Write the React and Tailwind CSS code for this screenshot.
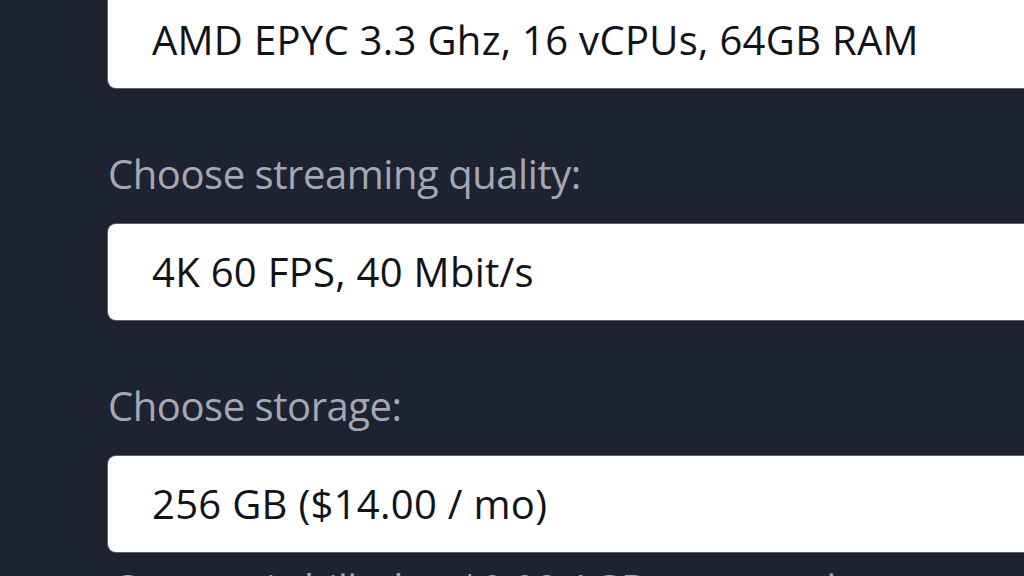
const options = [
  { label: null, value: 'AMD EPYC 3.3 Ghz, 16 vCPUs, 64GB RAM' },
  { label: 'Choose streaming quality:', value: '4K 60 FPS, 40 Mbit/s' },
  { label: 'Choose storage:', value: '256 GB ($14.00 / mo)' },
];

const App = () => {
  return (
    <div className="h-[576px] w-[1024px] overflow-hidden bg-[#1e2331]" style={{ fontFamily: '"Open Sans", "Noto Sans", sans-serif' }}>
      <div className="-mt-[8px] pl-[108px] flex flex-col">
        {options.map((opt, i) => (
          <div key={i}>
            {/* Label */}
            {opt.label && (
              <p className="mt-[56px] mb-[20px] text-[40px] leading-[60px] tracking-[-0.45px] text-[#a3a8b3]">{opt.label}</p>
            )}
            {/* Select box */}
            <div className="w-[1000px] h-[96px] flex items-center pl-[44px] rounded-[8px] bg-white shadow-[0_0_0_1px_#5b606b] text-[40px] leading-[60px] tracking-[0.3px] text-[#111318]">
              {opt.value}
            </div>
          </div>
        ))}
        <p className="mt-[7px] pl-[8px] text-[40px] leading-[60px] tracking-[-0.45px] text-[#a3a8b3]">Storage is billed at $0.02 / GB per month.</p>
      </div>
    </div>
  );
};

export default App;
